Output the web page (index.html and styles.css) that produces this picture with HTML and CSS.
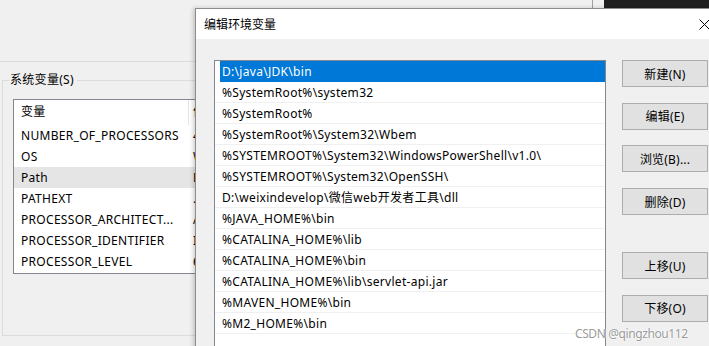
FILE: index.html
```html
<!DOCTYPE html>
<html lang="zh-CN">
<head>
    <meta charset="UTF-8">
    <title>编辑环境变量</title>
    <link rel="stylesheet" href="styles.css">
</head>
<body>

    <!-- ventana de fondo: variables de entorno -->
    <div class="env-window">
        <div class="top-panel"></div>

        <fieldset class="group">
            <legend>系统变量(S)</legend>
            <div class="var-list">
                <div class="var-head">
                    <div class="col-name">变量</div>
                    <div class="col-value">值</div>
                </div>
                <div class="var-row"><div class="col-name">NUMBER_OF_PROCESSORS</div><div class="col-value">4</div></div>
                <div class="var-row"><div class="col-name">OS</div><div class="col-value">Wi</div></div>
                <div class="var-row hot"><div class="col-name">Path</div><div class="col-value">D:</div></div>
                <div class="var-row"><div class="col-name">PATHEXT</div><div class="col-value">.C</div></div>
                <div class="var-row"><div class="col-name">PROCESSOR_ARCHITECT...</div><div class="col-value">AM</div></div>
                <div class="var-row"><div class="col-name">PROCESSOR_IDENTIFIER</div><div class="col-value">In</div></div>
                <div class="var-row"><div class="col-name">PROCESSOR_LEVEL</div><div class="col-value">6</div></div>
            </div>
        </fieldset>
    </div>

    <div class="other-window"></div>

    <!-- dialogo -->
    <div class="dialog">
        <div class="title-bar">
            <span class="title">编辑环境变量</span>
            <span class="close">
                <svg width="11" height="11" viewBox="0 0 11 11"><path d="M0.5 0.5L10.5 10.5M10.5 0.5L0.5 10.5" stroke="#000" stroke-width="1"/></svg>
            </span>
        </div>

        <div class="dialog-body">
            <div class="path-list">
                <div class="path-row selected">D:\java\JDK\bin</div>
                <div class="path-row">%SystemRoot%\system32</div>
                <div class="path-row">%SystemRoot%</div>
                <div class="path-row">%SystemRoot%\System32\Wbem</div>
                <div class="path-row">%SYSTEMROOT%\System32\WindowsPowerShell\v1.0\</div>
                <div class="path-row">%SYSTEMROOT%\System32\OpenSSH\</div>
                <div class="path-row">D:\weixindevelop\微信web开发者工具\dll</div>
                <div class="path-row">%JAVA_HOME%\bin</div>
                <div class="path-row">%CATALINA_HOME%\lib</div>
                <div class="path-row">%CATALINA_HOME%\bin</div>
                <div class="path-row">%CATALINA_HOME%\lib\servlet-api.jar</div>
                <div class="path-row">%MAVEN_HOME%\bin</div>
                <div class="path-row">%M2_HOME%\bin</div>
                <div class="path-row"></div>
            </div>

            <div class="buttons">
                <button>新建(N)</button>
                <button>编辑(E)</button>
                <button>浏览(B)...</button>
                <button>删除(D)</button>
                <button class="move-up">上移(U)</button>
                <button>下移(O)</button>
            </div>
        </div>
    </div>

    <div class="watermark">CSDN @qingzhou112</div>

</body>
</html>
```

FILE: styles.css
```css
* {
    margin: 0;
    padding: 0;
    box-sizing: border-box;
}

body {
    font-family: "Noto Sans", "Noto Sans CJK SC", sans-serif;
    font-size: 12px;
    letter-spacing: 0.3px;
    color: #000;
    background: #f0f0f0;
    width: 709px;
    height: 346px;
    overflow: hidden;
    position: relative;
}

/* ventana de fondo */
.env-window {
    width: 709px;
}

.top-panel {
    height: 62px;
    border-bottom: 1px solid #dcdcdc;
}

.group {
    margin: 10px 0 0 2px;
    height: 264px;
    border: 1px solid #dcdcdc;
    border-right: none;
    padding: 0 0 0 10px;
}

.group legend {
    margin-left: -4px;
    padding: 0 3px 0 1px;
    font-size: 12px;
    line-height: 16px;
}

.var-list {
    margin-top: 11px;
    width: 200px;
    height: 175px;
    background: #fff;
    border: 1px solid #828790;
    overflow: hidden;
}

.var-head, .var-row {
    display: flex;
    height: 21px;
    line-height: 21px;
    padding-left: 5px;
}

.var-head {
    height: 25px;
    line-height: 24px;
}

.col-name {
    flex: none;
    width: 170px;
    padding-left: 2px;
    white-space: nowrap;
}

.var-head .col-name {
    border-right: 1px solid #e5e5e5;
}

.col-value {
    padding-left: 4px;
    white-space: nowrap;
}

.var-row.hot {
    background: #e5e5e5;
}

/* ventana oscura arriba a la derecha */
.other-window {
    position: absolute;
    top: 0;
    left: 592px;
    width: 117px;
    height: 8px;
    border-left: 1px solid #a0a0a0;
    background: linear-gradient(to right, #f0f0f0 0 11px, #202020 11px);
}

/* dialogo */
.dialog {
    position: absolute;
    left: 195px;
    top: 8px;
    width: 533px;
    height: 360px;
    background: #f0f0f0;
    border: 1px solid #8c8c8c;
    box-shadow: -2px 0 4px rgba(0, 0, 0, 0.18);
}

.title-bar {
    height: 30px;
    background: #fff;
    display: flex;
    align-items: center;
    justify-content: space-between;
}

.title {
    padding-left: 8px;
    padding-bottom: 1px;
    letter-spacing: 0;
}

.close {
    width: 46px;
    display: flex;
    justify-content: center;
}

.dialog-body {
    display: flex;
    padding: 21px 0 0 18px;
}

.path-list {
    width: 392px;
    height: 300px;
    background: #fff;
    border: 1px solid #828790;
}

.path-row {
    height: 21px;
    line-height: 22px;
    padding-left: 7px;
    border-bottom: 1px solid #f0f0f0;
    white-space: nowrap;
}

.path-row.selected {
    margin-left: 5px;
    padding-left: 2px;
    background: #0078d7;
    color: #fff;
    border-bottom-color: #0078d7;
}

.buttons {
    display: flex;
    flex-direction: column;
    gap: 15.7px;
    margin-left: 16px;
}

.buttons button {
    width: 86px;
    height: 27px;
    background: #e1e1e1;
    border: 1px solid #adadad;
    font-family: inherit;
    font-size: 12px;
    letter-spacing: 0.2px;
    color: #000;
}

.buttons .move-up {
    margin-top: 21.3px;
}

.watermark {
    position: absolute;
    left: 575px;
    top: 325px;
    font-size: 12px;
    letter-spacing: -0.4px;
    color: rgba(120, 120, 120, 0.75);
    text-shadow: 0 0 2px #fff, 0 0 2px #fff;
}
```
